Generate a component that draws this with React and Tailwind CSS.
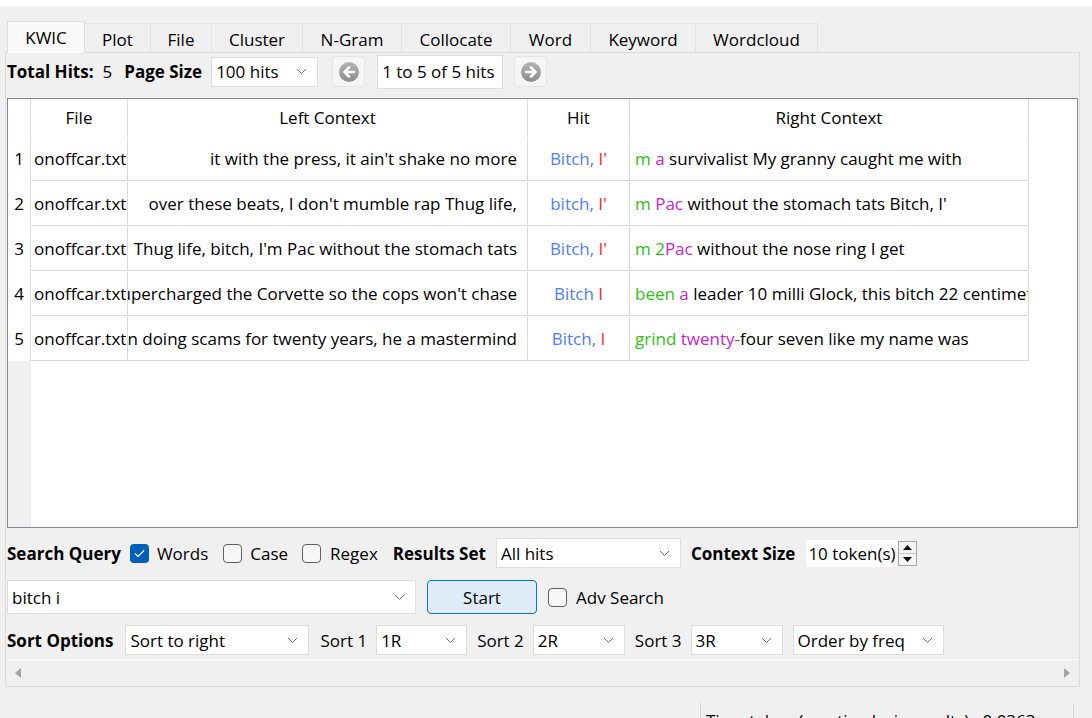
import React from "react";

const BLUE = "text-[#4f7dff]";
const RED = "text-[#ff1f1f]";
const GREEN = "text-[#2fbf12]";
const PINK = "text-[#c824c8]";

const rows = [
  {
    left: "it with the press, it ain't shake no more",
    hit: [["Bitch, ", BLUE], ["I'", RED]],
    right: [["m ", GREEN], ["a ", PINK], ["survivalist My granny caught me with", ""]],
  },
  {
    left: "over these beats, I don't mumble rap Thug life,",
    hit: [["bitch, ", BLUE], ["I'", RED]],
    right: [["m ", GREEN], ["Pac ", PINK], ["without the stomach tats Bitch, I'", ""]],
  },
  {
    left: "Thug life, bitch, I'm Pac without the stomach tats",
    hit: [["Bitch, ", BLUE], ["I'", RED]],
    right: [["m 2", GREEN], ["Pac ", PINK], ["without the nose ring I get", ""]],
  },
  {
    left: "I supercharged the Corvette so the cops won't chase",
    hit: [["Bitch ", BLUE], ["I", RED]],
    right: [["been ", GREEN], ["a ", PINK], ["leader 10 milli Glock, this bitch 22 centimeters", ""]],
  },
  {
    left: "I been doing scams for twenty years, he a mastermind",
    hit: [["Bitch, ", BLUE], ["I", RED]],
    right: [["grind ", GREEN], ["twenty-", PINK], ["four seven like my name was", ""]],
  },
];

const tabs = [
  ["KWIC", "w-[78px]"],
  ["Plot", "w-[66px]"],
  ["File", "w-[61px]"],
  ["Cluster", "w-[91px]"],
  ["N-Gram", "w-[99px]"],
  ["Collocate", "w-[109px]"],
  ["Word", "w-[80px]"],
  ["Keyword", "w-[105px]"],
  ["Wordcloud", "w-[122px]"],
];

function Chevron() {
  return (
    <svg width="11" height="7" viewBox="0 0 11 7" className="shrink-0">
      <path d="M1 1l4.5 4.5L10 1" fill="none" stroke="#707070" strokeWidth="1" />
    </svg>
  );
}

function Combo({ value, className }) {
  return (
    <div
      className={`flex shrink-0 items-center justify-between border border-[#dedede] bg-white pl-[4px] pr-[10px] ${className}`}
    >
      <span className="whitespace-nowrap pt-[1px]">{value}</span>
      <Chevron />
    </div>
  );
}

function Check({ checked }) {
  if (checked) {
    return (
      <span className="flex h-[19px] w-[19px] shrink-0 items-center justify-center rounded-[4px] bg-[#005fb8]">
        <svg width="11" height="9" viewBox="0 0 11 9">
          <path d="M1 4.5l3 3L10 1.5" fill="none" stroke="#fff" strokeWidth="1.2" />
        </svg>
      </span>
    );
  }
  return <span className="block h-[19px] w-[19px] shrink-0 rounded-[4px] border border-[#5e5e5e] bg-[#f7f7f7]" />;
}

function NavButton({ dir }) {
  return (
    <div className="flex h-[31px] w-[33px] items-center justify-center rounded-[4px] border border-[#e4e4e4] bg-[#f6f6f6]">
      <svg width="22" height="22" viewBox="0 0 22 22">
        <defs>
          <linearGradient id={`g${dir}`} x1="0" y1="0" x2="0" y2="1">
            <stop offset="0" stopColor="#b4b4b4" />
            <stop offset="1" stopColor="#8c8c8c" />
          </linearGradient>
        </defs>
        <circle cx="11" cy="11" r="10" fill={`url(#g${dir})`} />
        {dir === "left" ? (
          <path d="M16 11H7M11 6.5L6.5 11 11 15.5" fill="none" stroke="#fff" strokeWidth="2.6" strokeLinecap="round" strokeLinejoin="round" />
        ) : (
          <path d="M6 11h9M11 6.5l4.5 4.5-4.5 4.5" fill="none" stroke="#fff" strokeWidth="2.6" strokeLinecap="round" strokeLinejoin="round" />
        )}
      </svg>
    </div>
  );
}

function Spans({ parts }) {
  return (
    <span className="shrink-0 whitespace-pre">
      {parts.map(([t, c], i) => (
        <span key={i} className={c}>
          {t}
        </span>
      ))}
    </span>
  );
}

export default function App() {
  return (
    <div className="h-[718px] w-[1092px] overflow-hidden bg-[#f0f0f0] font-['Open_Sans',sans-serif] text-[17px] text-black">
      <div className="h-[6px] bg-white" />

      {/* tabs */}
      <div className="flex items-end pl-[7px] pt-[15px]">
        {tabs.map(([t, w], i) =>
          i === 0 ? (
            <div
              key={t}
              className={`relative z-10 -mb-px flex h-[32px] items-start justify-center border border-b-0 border-[#dcdcdc] bg-[#f9f9f9] pt-[3px] ${w}`}
            >
              {t}
            </div>
          ) : (
            <div
              key={t}
              className={`flex h-[29px] items-center justify-center border-t border-r border-[#e2e2e2] bg-[#f0f0f0] pt-[3px] ${w}`}
            >
              {t}
            </div>
          )
        )}
      </div>

      {/* pane */}
      <div className="ml-[5px] w-[1075px] border border-[#dcdcdc] pl-[1px]">
        {/* toolbar */}
        <div className="mt-[1px] flex h-[34px] items-center pt-[1px]">
          <span className="font-bold">Total Hits:</span>
          <span className="ml-[9px]">5</span>
          <span className="ml-[12px] font-bold">Page Size</span>
          <Combo value="100 hits" className="ml-[9px] h-[30px] w-[107px]" />
          <div className="ml-[14px]">
            <NavButton dir="left" />
          </div>
          <div className="ml-[12px] flex h-[34px] w-[126px] items-center border border-[#dedede] bg-white pl-[4px] whitespace-nowrap">
            1 to 5 of 5 hits
          </div>
          <div className="ml-[11px]">
            <NavButton dir="right" />
          </div>
        </div>

        {/* table */}
        <div className="mt-[10px] flex h-[430px] w-[1071px] flex-col overflow-hidden border border-[#828790] bg-white">
          <div className="flex h-[37px] shrink-0">
            <div className="w-[23px] shrink-0 border-r border-[#dadada]" />
            <div className="flex w-[97px] shrink-0 items-center justify-center border-r border-[#dadada]">File</div>
            <div className="flex w-[400px] shrink-0 items-center justify-center border-r border-[#dadada]">Left Context</div>
            <div className="flex w-[102px] shrink-0 items-center justify-center border-r border-[#dadada]">Hit</div>
            <div className="flex w-[399px] shrink-0 items-center justify-center border-r border-[#dadada]">Right Context</div>
          </div>
          {rows.map((r, i) => (
            <div key={i} className="flex h-[45px] shrink-0 pt-[1px]">
              <div className="flex w-[23px] shrink-0 items-center justify-center border-r border-[#dadada]">
                {i + 1}
              </div>
              <div className="flex w-[97px] shrink-0 items-center overflow-hidden whitespace-nowrap border-r border-b border-[#dadada] pl-[3px]">
                onoffcar.txt
              </div>
              <div className="flex w-[400px] shrink-0 items-center justify-end overflow-hidden whitespace-nowrap border-r border-b border-[#dadada] pr-[10px]">
                <span className="shrink-0">{r.left}</span>
              </div>
              <div className="flex w-[102px] shrink-0 items-center justify-center border-r border-b border-[#dadada]">
                <Spans parts={r.hit} />
              </div>
              <div className="flex w-[399px] shrink-0 items-center overflow-hidden border-r border-b border-[#dadada] pl-[5px]">
                <Spans parts={r.right} />
              </div>
            </div>
          ))}
          <div className="flex flex-1">
            <div className="w-[23px] bg-[#f0f0f0]" />
          </div>
        </div>

        {/* search row */}
        <div className="mt-[10px] flex h-[30px] items-center">
          <span className="pt-[1px] font-bold">Search Query</span>
          <span className="ml-[9px]">
            <Check checked />
          </span>
          <span className="ml-[8px] pt-[1px]">Words</span>
          <span className="ml-[15px]">
            <Check />
          </span>
          <span className="ml-[8px] pt-[1px]">Case</span>
          <span className="ml-[14px]">
            <Check />
          </span>
          <span className="ml-[9px] pt-[1px]">Regex</span>
          <span className="ml-[15px] pt-[1px] font-bold">Results Set</span>
          <Combo value="All hits" className="ml-[10px] h-[30px] w-[185px]" />
          <span className="ml-[10px] pt-[1px] font-bold">Context Size</span>
          <div className="ml-[11px] flex h-[27px] items-center">
            <div className="flex h-[27px] w-[91px] items-center bg-white pl-[2px] pt-[1px] whitespace-nowrap">10 token(s)</div>
            <div className="ml-[1px] flex h-[25px] w-[19px] flex-col border border-[#a8a8a8] bg-[#f4f4f4]">
              <div className="flex flex-1 items-center justify-center border-b border-[#c8c8c8]">
                <svg width="9" height="5" viewBox="0 0 9 5">
                  <path d="M4.5 0L9 5H0z" fill="#111" />
                </svg>
              </div>
              <div className="flex flex-1 items-center justify-center">
                <svg width="9" height="5" viewBox="0 0 9 5">
                  <path d="M0 0h9L4.5 5z" fill="#111" />
                </svg>
              </div>
            </div>
          </div>
        </div>

        {/* query row */}
        <div className="mt-[12px] flex h-[34px] items-center">
          <Combo value="bitch i" className="h-[34px] w-[409px]" />
          <div className="ml-[11px] flex h-[34px] w-[110px] items-center justify-center rounded-[4px] border border-[#0078d4] bg-[#dfebf7] pt-[1px]">
            Start
          </div>
          <span className="ml-[11px]">
            <Check />
          </span>
          <span className="ml-[9px] pt-[1px]">Adv Search</span>
        </div>

        {/* sort row */}
        <div className="mt-[11px] flex h-[30px] items-center">
          <span className="pt-[1px] font-bold">Sort Options</span>
          <Combo value="Sort to right" className="ml-[12px] h-[30px] w-[184px]" />
          <span className="ml-[11px] pt-[1px]">Sort 1</span>
          <Combo value="1R" className="ml-[9px] h-[30px] w-[91px]" />
          <span className="ml-[10px] pt-[1px]">Sort 2</span>
          <Combo value="2R" className="ml-[9px] h-[30px] w-[92px]" />
          <span className="ml-[10px] pt-[1px]">Sort 3</span>
          <Combo value="3R" className="ml-[9px] h-[30px] w-[92px]" />
          <Combo value="Order by freq" className="ml-[10px] h-[30px] w-[151px]" />
        </div>

        {/* horizontal scrollbar */}
        <div className="mt-[4px] flex h-[27px] w-[1071px] items-center justify-between border-t border-white px-[8px]">
          <svg width="6" height="10" viewBox="0 0 6 10">
            <path d="M6 0v10L0 5z" fill="#a3a3a3" />
          </svg>
          <svg width="6" height="10" viewBox="0 0 6 10">
            <path d="M0 0v10l6-5z" fill="#a3a3a3" />
          </svg>
        </div>
      </div>

      {/* status bar */}
      <div className="ml-[700px] mt-[16px] w-[374px] border-x border-[#d4d4d4] pl-[5px] pt-[5px] whitespace-nowrap">
        Time taken (creating kwic results):&nbsp; 0.0363 sec
      </div>
    </div>
  );
}
